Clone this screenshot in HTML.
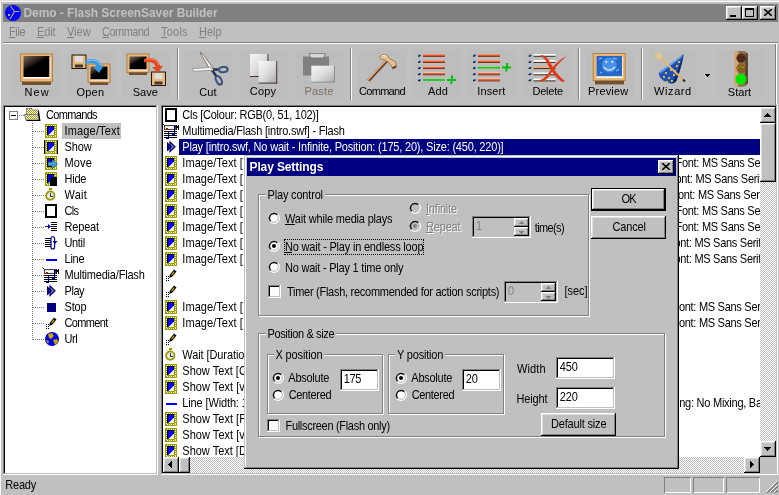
<!DOCTYPE html><html><head><meta charset="utf-8"><title>Demo - Flash ScreenSaver Builder</title><style>
html,body{margin:0;padding:0}
body{will-change:transform;width:779px;height:495px;overflow:hidden;background:#c0c0c0;position:relative;font:11px/13px "Liberation Sans",sans-serif;color:#000}
div,svg,span{position:absolute;white-space:nowrap}
u{text-decoration:none;border-bottom:1px solid currentColor;display:inline-block;line-height:9px}
.btn{background:#c0c0c0;box-shadow:inset -1px -1px #000,inset 1px 1px #fff,inset -2px -2px #808080,inset 2px 2px #dfdfdf}
.sunk{background:#fff;box-shadow:inset -1px -1px #fff,inset 1px 1px #808080,inset -2px -2px #c0c0c0,inset 2px 2px #000}
.dith{background:repeating-conic-gradient(#fff 0 25%,#c0c0c0 0 50%) 0 0/2px 2px}
.grp{border:1px solid #808080;box-shadow:1px 1px #fff,inset 1px 1px #fff}
.lab{background:#c0c0c0;padding:0 2px}
.dis{color:#808080;text-shadow:1px 1px #fff}
.tl{font-size:11px;line-height:13px;text-align:center}
.tb{background:#bdbdbd}
.x13{transform:scaleY(1.13);transform-origin:0 10px}
.x16{transform:scaleY(1.13);transform-origin:0 12px}
</style></head><body>
<svg width="0" height="0" style="left:0;top:0"><defs><linearGradient id="pg" x1="0" y1="0" x2="1" y2="1"><stop offset="0" stop-color="#f8f8f8"/><stop offset="0.5" stop-color="#dcdcdc"/><stop offset="1" stop-color="#a8a8a8"/></linearGradient><linearGradient id="sc" x1="0" y1="0" x2="0.7" y2="1"><stop offset="0" stop-color="#7a6a5c"/><stop offset="0.32" stop-color="#3a2c24"/><stop offset="0.5" stop-color="#000"/></linearGradient><pattern id="fd" width="2" height="2" patternUnits="userSpaceOnUse"><rect width="2" height="2" fill="#fff"/><rect width="1" height="1" fill="#a8a800"/><rect x="1" y="1" width="1" height="1" fill="#a8a800"/></pattern></defs></svg>
<div class="" style="left:0px;top:0px;width:779px;height:1px;background:#dcdcdc"></div>
<div class="" style="left:0px;top:1px;width:779px;height:1px;background:#fff"></div>
<div class="" style="left:0px;top:1px;width:1px;height:494px;background:#fff"></div>
<div class="" style="left:3px;top:4px;width:775px;height:18px;background:#808080"></div>
<svg style="left:5px;top:5px" width="16" height="16" viewBox="0 0 16 16" shape-rendering="crispEdges" ><circle cx="8" cy="8" r="8" fill="#0000ff" shape-rendering="auto"/><path d="M5.500 1 L9.500 6.500 L14.500 6.500 M9.500 6.500 L5 14" fill="none" stroke="#b0a878" stroke-width="1.200" shape-rendering="auto"/><rect x="2.500" y="9" width="2" height="2" fill="#b0a878"/></svg>
<div class="" style="left:23.5px;top:6px;font-weight:bold;color:#c0c0c0;font-size:12px;line-height:14px;letter-spacing:-0.062px">Demo - Flash ScreenSaver Builder</div>
<div class="btn" style="left:726px;top:6px;width:16px;height:14px;"></div>
<div class="" style="left:730px;top:15px;width:6px;height:2px;background:#000"></div>
<div class="btn" style="left:742px;top:6px;width:16px;height:14px;"></div>
<div class="" style="left:745px;top:8px;width:9px;height:9px;border:1px solid #000;border-top-width:2px;box-sizing:border-box"></div>
<div class="btn" style="left:760px;top:6px;width:16px;height:14px;"></div>
<svg style="left:764px;top:9px" width="8" height="7" viewBox="0 0 8 7" shape-rendering="crispEdges" ><path d="M0 0 L8 7 M8 0 L0 7" stroke="#000" stroke-width="1.6" shape-rendering="auto"/></svg>
<div class="" style="left:9px;top:37px;width:6px;height:1px;background:#808080"></div>
<div class="x13" style="left:9px;top:26px;color:#808080;letter-spacing:-0.373px">File</div>
<div class="" style="left:37px;top:37px;width:7px;height:1px;background:#808080"></div>
<div class="x13" style="left:37px;top:26px;color:#808080;letter-spacing:-0.123px">Edit</div>
<div class="" style="left:67px;top:37px;width:7px;height:1px;background:#808080"></div>
<div class="x13" style="left:67px;top:26px;color:#808080;letter-spacing:-0.014px">View</div>
<div class="" style="left:102px;top:37px;width:7px;height:1px;background:#808080"></div>
<div class="x13" style="left:102px;top:26px;color:#808080;letter-spacing:-0.525px">Command</div>
<div class="" style="left:161px;top:37px;width:6px;height:1px;background:#808080"></div>
<div class="x13" style="left:161px;top:26px;color:#808080;letter-spacing:0.228px">Tools</div>
<div class="" style="left:199px;top:37px;width:7px;height:1px;background:#808080"></div>
<div class="x13" style="left:199px;top:26px;color:#808080;letter-spacing:-0.008px">Help</div>
<div class="" style="left:3px;top:42px;width:775px;height:1px;background:#808080"></div>
<div class="" style="left:3px;top:43px;width:775px;height:1px;background:#fff"></div>
<div class="" style="left:775px;top:44px;width:1px;height:61px;background:#808080"></div>
<div class="" style="left:776px;top:44px;width:1px;height:61px;background:#fff"></div>
<div class="tb" style="left:12px;top:50px;width:48px;height:48px;"></div>
<svg style="left:12px;top:50px" width="48" height="37" viewBox="0 0 48 37"><rect x="8" y="3.500" width="33" height="28.500" fill="#e8b878"/><rect x="8.500" y="4" width="32" height="27.500" fill="none" stroke="#b08048" stroke-width="1"/><rect x="11.500" y="6" width="26" height="21" fill="url(#sc)"/><rect x="11.500" y="27" width="27" height="1.500" fill="#fff"/><rect x="37.500" y="7" width="1" height="20" fill="#f8e8d0"/><rect x="10" y="32" width="29" height="3" fill="#705030"/></svg>
<div class="" style="left:24.6px;top:86px;color:#000;letter-spacing:1.0px">New</div>
<div class="tb" style="left:67px;top:50px;width:48px;height:48px;"></div>
<svg style="left:67px;top:50px" width="48" height="37" viewBox="0 0 48 37"><rect x="5" y="5" width="14" height="13.500" fill="#e8b878" stroke="#201810" stroke-width="1"/><rect x="8" y="6" width="8" height="6" fill="#dcdcdc"/><rect x="8" y="14.5" width="8" height="3" fill="#403830"/><rect x="21" y="14" width="22" height="18.500" fill="#e8b878" stroke="#b08048" stroke-width="1"/><rect x="23.5" y="16.5" width="17" height="13" fill="url(#sc)"/><rect x="23.5" y="29.5" width="18" height="1" fill="#fff"/><rect x="23" y="32.5" width="18" height="2.500" fill="#705030"/><path d="M18 11 C25 7 33 9 34 16 L37 15 L32 23 L26 17 L29.500 17 C29 13 25 12 18 14z" fill="#3098e0"/><path d="M20 11.500 C26 9 31 10 33 15" stroke="#90d0ff" stroke-width="1" fill="none"/></svg>
<div class="" style="left:76.5px;top:86px;color:#000;letter-spacing:0.221px">Open</div>
<div class="tb" style="left:122px;top:50px;width:48px;height:48px;"></div>
<svg style="left:122px;top:50px" width="48" height="37" viewBox="0 0 48 37"><rect x="5" y="4" width="22" height="18.500" fill="#e8b878" stroke="#b08048" stroke-width="1"/><rect x="7.5" y="6.5" width="17" height="13" fill="url(#sc)"/><rect x="7.5" y="19.5" width="18" height="1" fill="#fff"/><rect x="7" y="22.5" width="18" height="2.500" fill="#705030"/><rect x="29.5" y="22" width="14" height="13.500" fill="#e8b878" stroke="#201810" stroke-width="1"/><rect x="32.5" y="23" width="8" height="6" fill="#dcdcdc"/><rect x="32.5" y="31.5" width="8" height="3" fill="#403830"/><path d="M22 9 C30 6 37 10 38 16 L41 15.500 L36 23 L30 17 L33.500 17 C33 13 29 11 22 12.500z" fill="#e04820"/><path d="M24 9.500 C30 8 35 10 37 15" stroke="#ff9070" stroke-width="1" fill="none"/></svg>
<div class="" style="left:132.7px;top:86px;color:#000;letter-spacing:0.069px">Save</div>
<div class="" style="left:177px;top:48px;width:1px;height:52px;background:#808080"></div>
<div class="" style="left:178px;top:48px;width:1px;height:52px;background:#fff"></div>
<div class="tb" style="left:185px;top:50px;width:48px;height:48px;"></div>
<svg style="left:185px;top:50px" width="48" height="37" viewBox="0 0 48 37"><polygon points="15,2.500 17.800,4 28.500,18.500 25.500,20.500" fill="#f0f0f0" stroke="#504840" stroke-width="0.700"/><polygon points="7,18.700 26,17.300 27.500,20.300 9,21.300" fill="#f0f0f0" stroke="#807870" stroke-width="0.600"/><path d="M27 19.400 L33 19.500 M27 20 L31.500 26.500" stroke="#283050" stroke-width="2.400"/><ellipse cx="38.300" cy="19.600" rx="4.300" ry="2.600" fill="none" stroke="#38507c" stroke-width="2" transform="rotate(-5 38.300 19.600)"/><ellipse cx="33.800" cy="30.300" rx="2.500" ry="4.600" fill="none" stroke="#38507c" stroke-width="2" transform="rotate(-28 33.800 30.300)"/><circle cx="27.300" cy="19.500" r="1" fill="#e0e0e0"/></svg>
<div class="" style="left:199.2px;top:86px;color:#000;letter-spacing:0.088px">Cut</div>
<div class="tb" style="left:240px;top:50px;width:48px;height:48px;"></div>
<svg style="left:240px;top:50px" width="48" height="37" viewBox="0 0 48 37"><rect x="10" y="4" width="18.5" height="23" fill="url(#pg)"/><rect x="27.5" y="4" width="1" height="23" fill="#403030"/><rect x="10" y="26" width="18.5" height="1" fill="#403030"/><rect x="18.7" y="11" width="18.5" height="22.6" fill="url(#pg)"/><rect x="36.2" y="11" width="1" height="22.6" fill="#403030"/><rect x="18.7" y="32.6" width="18.5" height="1" fill="#403030"/></svg>
<div class="" style="left:249.8px;top:85px;color:#000;letter-spacing:0.204px">Copy</div>
<div class="tb" style="left:295px;top:50px;width:48px;height:48px;"></div>
<svg style="left:295px;top:50px" width="48" height="37" viewBox="0 0 48 37"><rect x="8" y="6.500" width="26" height="19" fill="#808080"/><path d="M14 3.600 h16.400 l-2 4.400 h-12.400z" fill="#d8d8d8" stroke="#707070" stroke-width="0.800"/><rect x="16.300" y="15.700" width="23.700" height="17" fill="url(#pg)"/><rect x="16.300" y="31.700" width="23.700" height="1" fill="#909090"/><rect x="39" y="15.700" width="1" height="17" fill="#909090"/></svg>
<div class="" style="left:304.5px;top:85px;color:#807060;letter-spacing:0.186px">Paste</div>
<div class="" style="left:350px;top:48px;width:1px;height:52px;background:#808080"></div>
<div class="" style="left:351px;top:48px;width:1px;height:52px;background:#fff"></div>
<div class="tb" style="left:358px;top:50px;width:48px;height:48px;"></div>
<svg style="left:358px;top:50px" width="48" height="37" viewBox="0 0 48 37"><path d="M10.500 30.500 L30 9.500" stroke="#604020" stroke-width="3.200"/><path d="M10 29.700 L29.500 8.700" stroke="#e0b080" stroke-width="1.600"/><path d="M21.500 7 L24 4.500 L29 5 L32 9 L37.500 11.500 L38.500 15.500 L34 17.500 L32 13.500 L27 10 L23.500 9.500z" fill="#e8c090" stroke="#806040" stroke-width="0.700"/><path d="M34 17.500 L38.500 15.500 L38.500 17.500 L34.500 19.300z" fill="#604020"/><path d="M24 5.500 L28.500 6" stroke="#fff" stroke-width="1"/></svg>
<div class="" style="left:359.0px;top:85px;color:#000;letter-spacing:-0.692px">Command</div>
<div class="tb" style="left:413px;top:50px;width:48px;height:48px;"></div>
<svg style="left:413px;top:50px" width="48" height="37" viewBox="0 0 48 37"><rect x="5.5" y="4.6" width="2.500" height="1.500" fill="#2060c0"/><rect x="5" y="5.6" width="2" height="1" fill="#000"/><rect x="10" y="3.9" width="22" height="0.700" fill="#f8c8b0"/><rect x="10" y="4.5" width="22" height="1.500" fill="#e86030"/><rect x="10" y="5.9" width="22" height="0.900" fill="#802000"/><rect x="5.5" y="10.8" width="2.500" height="1.500" fill="#2060c0"/><rect x="5" y="11.8" width="2" height="1" fill="#000"/><rect x="10" y="10.0" width="22" height="0.700" fill="#f8c8b0"/><rect x="10" y="10.6" width="22" height="1.500" fill="#e86030"/><rect x="10" y="12.0" width="22" height="0.900" fill="#802000"/><rect x="5.5" y="16.9" width="2.500" height="1.500" fill="#2060c0"/><rect x="5" y="17.9" width="2" height="1" fill="#000"/><rect x="10" y="16.2" width="22" height="0.700" fill="#f8c8b0"/><rect x="10" y="16.8" width="22" height="1.500" fill="#e86030"/><rect x="10" y="18.2" width="22" height="0.900" fill="#802000"/><rect x="5.5" y="23.1" width="2.500" height="1.500" fill="#2060c0"/><rect x="5" y="24.1" width="2" height="1" fill="#000"/><rect x="10" y="22.4" width="22" height="0.700" fill="#f8c8b0"/><rect x="10" y="23.0" width="22" height="1.500" fill="#e86030"/><rect x="10" y="24.4" width="22" height="0.900" fill="#802000"/><rect x="5.5" y="29.2" width="2.500" height="1.500" fill="#2060c0"/><rect x="5" y="30.2" width="2" height="1" fill="#000"/><rect x="10" y="29.2" width="22" height="1.600" fill="#00d000"/><path d="M34 30.0 h9 M39.2 25.5 l-1 8.500" stroke="#00c000" stroke-width="2"/></svg>
<div class="" style="left:428.0px;top:85px;color:#000;letter-spacing:0.203px">Add</div>
<div class="tb" style="left:468px;top:50px;width:48px;height:48px;"></div>
<svg style="left:468px;top:50px" width="48" height="37" viewBox="0 0 48 37"><rect x="5.5" y="4.6" width="2.500" height="1.500" fill="#2060c0"/><rect x="5" y="5.6" width="2" height="1" fill="#000"/><rect x="10" y="3.9" width="22" height="0.700" fill="#f8c8b0"/><rect x="10" y="4.5" width="22" height="1.500" fill="#e86030"/><rect x="10" y="5.9" width="22" height="0.900" fill="#802000"/><rect x="5.5" y="10.8" width="2.500" height="1.500" fill="#2060c0"/><rect x="5" y="11.8" width="2" height="1" fill="#000"/><rect x="10" y="10.0" width="22" height="0.700" fill="#f8c8b0"/><rect x="10" y="10.6" width="22" height="1.500" fill="#e86030"/><rect x="10" y="12.0" width="22" height="0.900" fill="#802000"/><rect x="5.5" y="16.9" width="2.500" height="1.500" fill="#2060c0"/><rect x="5" y="17.9" width="2" height="1" fill="#000"/><rect x="10" y="16.9" width="22" height="1.600" fill="#00d000"/><rect x="5.5" y="23.1" width="2.500" height="1.500" fill="#2060c0"/><rect x="5" y="24.1" width="2" height="1" fill="#000"/><rect x="10" y="22.4" width="22" height="0.700" fill="#f8c8b0"/><rect x="10" y="23.0" width="22" height="1.500" fill="#e86030"/><rect x="10" y="24.4" width="22" height="0.900" fill="#802000"/><rect x="5.5" y="29.2" width="2.500" height="1.500" fill="#2060c0"/><rect x="5" y="30.2" width="2" height="1" fill="#000"/><rect x="10" y="28.5" width="22" height="0.700" fill="#f8c8b0"/><rect x="10" y="29.1" width="22" height="1.500" fill="#e86030"/><rect x="10" y="30.5" width="22" height="0.900" fill="#802000"/><path d="M34 17.5 h9 M39.2 13 l-1 8.500" stroke="#00c000" stroke-width="2"/></svg>
<div class="" style="left:477.2px;top:85px;color:#000;letter-spacing:0.134px">Insert</div>
<div class="tb" style="left:523px;top:50px;width:48px;height:48px;"></div>
<svg style="left:523px;top:50px" width="48" height="37" viewBox="0 0 48 37"><rect x="6.1" y="4.6" width="2.500" height="1.500" fill="#2060c0"/><rect x="5.6" y="5.6" width="2" height="1" fill="#000"/><rect x="10.6" y="4.0" width="21.9" height="1.800" fill="#fff"/><rect x="10.6" y="5.8" width="21.9" height="1" fill="#403020"/><rect x="6.1" y="10.8" width="2.500" height="1.500" fill="#2060c0"/><rect x="5.6" y="11.8" width="2" height="1" fill="#000"/><rect x="10.6" y="10.1" width="21.9" height="1.800" fill="#fff"/><rect x="10.6" y="11.9" width="21.9" height="1" fill="#403020"/><rect x="6.1" y="16.9" width="2.500" height="1.500" fill="#2060c0"/><rect x="5.6" y="17.9" width="2" height="1" fill="#000"/><rect x="10.6" y="16.3" width="21.9" height="1.800" fill="#e8b078"/><rect x="10.6" y="18.1" width="21.9" height="1" fill="#403020"/><rect x="6.1" y="23.1" width="2.500" height="1.500" fill="#2060c0"/><rect x="5.6" y="24.1" width="2" height="1" fill="#000"/><rect x="10.6" y="22.5" width="21.9" height="1.800" fill="#fff"/><rect x="10.6" y="24.3" width="21.9" height="1" fill="#403020"/><rect x="6.1" y="29.2" width="2.500" height="1.500" fill="#2060c0"/><rect x="5.6" y="30.2" width="2" height="1" fill="#000"/><rect x="10.6" y="28.6" width="21.9" height="1.800" fill="#fff"/><rect x="10.6" y="30.4" width="21.9" height="1" fill="#403020"/><path d="M17 5 C21 5 24 7 27 12 C31 20 36 27 42 31 L39 32 C33 28 27 20 24 13 C22 9 20 7 17 5z" fill="#e03818"/><path d="M44 6 C38 10 30 20 27 25 C24 29 22 31 18 32 L17 30 C21 29 24 25 27 21 C32 14 38 8 44 6z" fill="#e03818"/></svg>
<div class="" style="left:532.5px;top:85px;color:#000;letter-spacing:-0.242px">Delete</div>
<div class="" style="left:578px;top:48px;width:1px;height:52px;background:#808080"></div>
<div class="" style="left:579px;top:48px;width:1px;height:52px;background:#fff"></div>
<div class="tb" style="left:586px;top:50px;width:48px;height:48px;"></div>
<svg style="left:586px;top:50px" width="48" height="37" viewBox="0 0 48 37"><rect x="6.700" y="3" width="33" height="28" fill="#e8b878"/><rect x="7.200" y="3.500" width="32" height="27" fill="none" stroke="#b08048" stroke-width="1"/><rect x="10.600" y="6" width="25.400" height="20.400" fill="#2468c8"/><circle cx="23.300" cy="15" r="7.500" fill="#4890e8"/><circle cx="20.300" cy="12" r="1.200" fill="#c8e0ff"/><circle cx="26.300" cy="12" r="1.200" fill="#c8e0ff"/><path d="M17.500 17 Q23.300 23 29 17" stroke="#c8e0ff" stroke-width="1.600" fill="none"/><path d="M13 9 l3 -1 M27 8 l4 1 M14 22 l2 1 M30 21 l3 -2" stroke="#a0c8f8" stroke-width="1"/><rect x="10.600" y="26.400" width="26.400" height="1.500" fill="#fff"/><rect x="36" y="7" width="1" height="20" fill="#f8e8d0"/><rect x="9" y="31" width="29" height="3.400" fill="#705030"/></svg>
<div class="" style="left:588.1px;top:85px;color:#000;letter-spacing:0.146px">Preview</div>
<div class="" style="left:641px;top:48px;width:1px;height:52px;background:#808080"></div>
<div class="" style="left:642px;top:48px;width:1px;height:52px;background:#fff"></div>
<div class="tb" style="left:649px;top:50px;width:48px;height:48px;"></div>
<svg style="left:649px;top:50px" width="48" height="37" viewBox="0 0 48 37"><path d="M34.700 4 C30 8 17 17 10 22.600 C9 27 14 32 21.800 33.500 C25 33.500 27.500 32 28 29 C30 24 33 14 34.700 4z" fill="#2050b8"/><path d="M34.700 4 C33 14 30 24 28 29 C27.500 32 25 33.500 21.800 33.500 C25 30 30 18 34.700 4z" fill="#102868"/><path d="M33 6 C28 10 17 18 11 23" stroke="#60a8e8" stroke-width="1.500" fill="none"/><rect x="16" y="22" width="2" height="2" fill="#d8c030"/><rect x="21" y="19" width="2" height="2" fill="#d8c030"/><rect x="14" y="26" width="2" height="2" fill="#d8c030"/><rect x="19" y="27" width="2" height="2" fill="#d8c030"/><rect x="24" y="24" width="2" height="2" fill="#d8c030"/><rect x="22" y="30" width="2" height="2" fill="#d8c030"/><rect x="27" y="15" width="2" height="2" fill="#d8c030"/><rect x="29" y="11" width="2" height="2" fill="#d8c030"/><rect x="17" y="31" width="2" height="2" fill="#d8c030"/><rect x="25" y="20" width="2" height="2" fill="#d8c030"/><path d="M10 6.500 L36 31.500" stroke="#e0b870" stroke-width="1.800"/><path d="M34 29.500 L36 31.500" stroke="#302010" stroke-width="2"/><path d="M9.700 1.500 L9.700 10.500 M5.500 6 L14 6 M6.700 3 L12.700 9 M13 2.500 L6.500 9.500" stroke="#e8c888" stroke-width="1.200"/></svg>
<div class="" style="left:654.1px;top:85px;color:#000;letter-spacing:0.576px">Wizard</div>
<svg style="left:705px;top:74px" width="5" height="3" viewBox="0 0 5 3" shape-rendering="crispEdges" ><polygon points="0,0 5,0 2.5,3" fill="#000"/></svg>
<div class="tb" style="left:717px;top:50px;width:48px;height:48px;"></div>
<svg style="left:717px;top:50px" width="48" height="37" viewBox="0 0 48 37"><rect x="17" y="1" width="14" height="35.700" rx="5" fill="#8c7050"/><rect x="17" y="1" width="4.500" height="35.700" rx="2" fill="#d0a878"/><rect x="28" y="3" width="3" height="31" rx="1.500" fill="#604830"/><circle cx="24" cy="8" r="4.600" fill="#482818"/><circle cx="24" cy="18.200" r="4.600" fill="#806020"/><circle cx="24" cy="29.200" r="5.500" fill="#00e800"/><path d="M20 7 l3 -3 3 2 2 -2" stroke="#d04020" stroke-width="0.800" fill="none" stroke-dasharray="1 1"/><path d="M20 19 l3 -3 3 2 2 -3" stroke="#d8c020" stroke-width="0.800" fill="none" stroke-dasharray="1 1"/></svg>
<div class="" style="left:727.8px;top:86px;color:#000;letter-spacing:0.038px">Start</div>
<div class="sunk" style="left:3px;top:105px;width:155px;height:370px;"></div>
<div class="" style="left:9px;top:111px;width:9px;height:9px;border:1px solid #808080;box-sizing:border-box;background:#fff"></div>
<div class="" style="left:11px;top:115px;width:5px;height:1px;background:#000"></div>
<div class="" style="left:19px;top:115px;width:5px;height:1px;background:repeating-linear-gradient(90deg,#808080 0 1px,transparent 1px 2px)"></div>
<svg style="left:24px;top:108px" width="17" height="14" viewBox="0 0 17 14" shape-rendering="crispEdges" ><path d="M2.500 0.500 h5.500 l1.500 1.500 h5 v4.500 h-12z" fill="url(#fd)" stroke="#808080" stroke-width="1" shape-rendering="auto"/><path d="M0.500 6.500 h13 l1 5.500 h-12.500z" fill="url(#fd)" stroke="#808080" stroke-width="1" shape-rendering="auto"/><path d="M14 3 h1 l1.500 10 h-14 v-1 h12.500 l-1 -5.500z" fill="#000" shape-rendering="auto"/></svg>
<div class="x16" style="left:46px;top:107px;;letter-spacing:-0.664px;line-height:16px">Commands</div>
<div class="" style="left:32px;top:123px;width:1px;height:217px;background:repeating-linear-gradient(180deg,#808080 0 1px,transparent 1px 2px)"></div>
<div class="" style="left:33px;top:131px;width:11px;height:1px;background:repeating-linear-gradient(90deg,#808080 0 1px,transparent 1px 2px)"></div>
<svg style="left:45px;top:124px" width="16" height="16" viewBox="0 0 16 16" shape-rendering="crispEdges" overflow="visible"><rect x="0" y="0" width="12" height="14" fill="#a0a000"/><rect x="1.5" y="1.5" width="9" height="11" fill="none" stroke="#f0f0d0" stroke-width="1" stroke-dasharray="1 1"/><rect x="2" y="2" width="7" height="9" fill="#000"/><rect x="3" y="3" width="6" height="8" fill="#fff"/><polygon points="3,3 9,3 9,5.5 3.5,11 3,11" fill="#0000ff" shape-rendering="auto"/></svg>
<div class="" style="left:62px;top:123px;width:59px;height:16px;background:#c0c0c0"></div>
<div class="x16" style="left:64.5px;top:123px;;letter-spacing:0.162px;line-height:16px">Image/Text</div>
<div class="" style="left:33px;top:147px;width:11px;height:1px;background:repeating-linear-gradient(90deg,#808080 0 1px,transparent 1px 2px)"></div>
<svg style="left:45px;top:140px" width="16" height="16" viewBox="0 0 16 16" shape-rendering="crispEdges" overflow="visible"><rect x="0" y="0" width="12" height="14" fill="#a0a000"/><rect x="1.5" y="1.5" width="9" height="11" fill="none" stroke="#f0f0d0" stroke-width="1" stroke-dasharray="1 1"/><rect x="2" y="2" width="7" height="9" fill="#000"/><rect x="3" y="3" width="6" height="8" fill="#fff"/><polygon points="3,3 9,3 9,5.5 3.5,11 3,11" fill="#0000ff" shape-rendering="auto"/><rect x="-1" y="0" width="1" height="14" fill="#000"/><rect x="12" y="0" width="1" height="14" fill="#000"/></svg>
<div class="x16" style="left:64.5px;top:139px;;letter-spacing:-0.077px;line-height:16px">Show</div>
<div class="" style="left:33px;top:163px;width:11px;height:1px;background:repeating-linear-gradient(90deg,#808080 0 1px,transparent 1px 2px)"></div>
<svg style="left:45px;top:156px" width="16" height="16" viewBox="0 0 16 16" shape-rendering="crispEdges" overflow="visible"><rect x="0" y="0" width="12" height="14" fill="#a0a000"/><rect x="1.5" y="1.5" width="9" height="11" fill="none" stroke="#f0f0d0" stroke-width="1" stroke-dasharray="1 1"/><rect x="2" y="2" width="7" height="9" fill="#000"/><rect x="3" y="3" width="6" height="8" fill="#fff"/><rect x="3" y="3" width="6" height="8" fill="#000"/><rect x="3" y="3" width="3" height="3" fill="#0000ff"/><polygon points="3,6 7,6 7,3 12.5,8 7,13 7,10 3,10" fill="#40a0d8" stroke="#103060" stroke-width="0.5" shape-rendering="auto"/></svg>
<div class="x16" style="left:64.5px;top:155px;;letter-spacing:0.131px;line-height:16px">Move</div>
<div class="" style="left:33px;top:179px;width:11px;height:1px;background:repeating-linear-gradient(90deg,#808080 0 1px,transparent 1px 2px)"></div>
<svg style="left:45px;top:172px" width="16" height="16" viewBox="0 0 16 16" shape-rendering="crispEdges" overflow="visible"><rect x="0" y="0" width="12" height="14" fill="#a0a000"/><rect x="1.5" y="1.5" width="9" height="11" fill="none" stroke="#f0f0d0" stroke-width="1" stroke-dasharray="1 1"/><rect x="2" y="2" width="7" height="9" fill="#000"/><rect x="3" y="3" width="6" height="8" fill="#fff"/><polygon points="3,3 9,3 9,5.5 3.5,11 3,11" fill="#0000ff" shape-rendering="auto"/><rect x="5" y="5" width="7" height="9" fill="#000"/></svg>
<div class="x16" style="left:64.5px;top:171px;;letter-spacing:-0.242px;line-height:16px">Hide</div>
<div class="" style="left:33px;top:195px;width:11px;height:1px;background:repeating-linear-gradient(90deg,#808080 0 1px,transparent 1px 2px)"></div>
<svg style="left:45px;top:188px" width="16" height="16" viewBox="0 0 16 16" shape-rendering="crispEdges" overflow="visible"><circle cx="5.3" cy="7.6" r="4.2" fill="#e8e8e8" stroke="#989800" stroke-width="1.8" shape-rendering="auto"/><rect x="4" y="0" width="3" height="2" fill="#989800"/><rect x="5" y="5" width="1" height="4" fill="#404040"/><rect x="5" y="8" width="3" height="1" fill="#404040"/></svg>
<div class="x16" style="left:64.5px;top:187px;;letter-spacing:0.202px;line-height:16px">Wait</div>
<div class="" style="left:33px;top:211px;width:11px;height:1px;background:repeating-linear-gradient(90deg,#808080 0 1px,transparent 1px 2px)"></div>
<svg style="left:45px;top:204px" width="16" height="16" viewBox="0 0 16 16" shape-rendering="crispEdges" overflow="visible"><rect x="1" y="1" width="10" height="12" fill="#fff" stroke="#000" stroke-width="2"/></svg>
<div class="x16" style="left:64.5px;top:203px;;letter-spacing:-0.638px;line-height:16px">Cls</div>
<div class="" style="left:33px;top:227px;width:11px;height:1px;background:repeating-linear-gradient(90deg,#808080 0 1px,transparent 1px 2px)"></div>
<svg style="left:45px;top:220px" width="16" height="16" viewBox="0 0 16 16" shape-rendering="crispEdges" overflow="visible"><rect x="0" y="6" width="5" height="1" fill="#0000c0"/><polygon points="3,4 6,6.5 3,9" fill="#0000c0" shape-rendering="auto"/><rect x="6" y="2" width="6" height="1" fill="#000"/><rect x="6" y="4" width="6" height="1" fill="#000"/><rect x="6" y="6" width="6" height="1" fill="#000"/><rect x="6" y="8" width="6" height="1" fill="#000"/><rect x="6" y="10" width="6" height="1" fill="#000"/></svg>
<div class="x16" style="left:64.5px;top:219px;;letter-spacing:-0.18px;line-height:16px">Repeat</div>
<div class="" style="left:33px;top:243px;width:11px;height:1px;background:repeating-linear-gradient(90deg,#808080 0 1px,transparent 1px 2px)"></div>
<svg style="left:45px;top:236px" width="16" height="16" viewBox="0 0 16 16" shape-rendering="crispEdges" overflow="visible"><rect x="0" y="2" width="6" height="1" fill="#000"/><rect x="0" y="4" width="6" height="1" fill="#000"/><rect x="0" y="6" width="6" height="1" fill="#000"/><rect x="0" y="8" width="6" height="1" fill="#000"/><rect x="0" y="10" width="6" height="1" fill="#000"/><path d="M6 4 V2.500 Q6 0.600 7.800 0.600 Q9.600 0.600 9.600 2.500 V11 Q9.600 13 7.800 13 Q6 13 6 11 V2.500" fill="#fff" stroke="#000090" stroke-width="1.200" shape-rendering="auto"/><polygon points="7.500,5 12.500,5 10,8" fill="#000090" shape-rendering="auto"/></svg>
<div class="x16" style="left:64.5px;top:235px;;letter-spacing:-0.35px;line-height:16px">Until</div>
<div class="" style="left:33px;top:259px;width:11px;height:1px;background:repeating-linear-gradient(90deg,#808080 0 1px,transparent 1px 2px)"></div>
<svg style="left:45px;top:252px" width="16" height="16" viewBox="0 0 16 16" shape-rendering="crispEdges" overflow="visible"><rect x="1" y="7" width="11" height="2" fill="#0000ff"/></svg>
<div class="x16" style="left:64.5px;top:251px;;letter-spacing:-0.237px;line-height:16px">Line</div>
<div class="" style="left:33px;top:275px;width:11px;height:1px;background:repeating-linear-gradient(90deg,#808080 0 1px,transparent 1px 2px)"></div>
<svg style="left:45px;top:268px" width="16" height="16" viewBox="0 0 16 16" shape-rendering="crispEdges" overflow="visible"><path d="M-2.500 -0.500 L0 2" stroke="#000" stroke-width="1" shape-rendering="auto"/><rect x="-0.500" y="1.500" width="11" height="4" fill="#e8e8e8" stroke="#404040" stroke-width="1"/><rect x="1" y="3" width="7" height="1" fill="#fff"/><rect x="1" y="4" width="2" height="1" fill="#e00000"/><rect x="-1" y="7" width="13" height="1" fill="#000"/><rect x="-1" y="9" width="13" height="1" fill="#000"/><rect x="-1" y="11" width="13" height="1" fill="#000"/><rect x="-1" y="13" width="13" height="1" fill="#000"/><rect x="3" y="7" width="1" height="8" fill="#000090"/><rect x="1" y="13" width="3" height="2" fill="#000090"/><rect x="9" y="2" width="1" height="9" fill="#000090"/><rect x="7" y="9" width="3" height="2" fill="#000090"/><rect x="9" y="2" width="3" height="1" fill="#000090"/><rect x="3" y="7" width="2" height="1" fill="#000090"/><rect x="11" y="1" width="1" height="5" fill="#000"/><rect x="13" y="1" width="1" height="5" fill="#000"/><rect x="12" y="2" width="1" height="2" fill="#000"/></svg>
<div class="x16" style="left:64.5px;top:267px;;letter-spacing:-0.19px;line-height:16px">Multimedia/Flash</div>
<div class="" style="left:33px;top:291px;width:11px;height:1px;background:repeating-linear-gradient(90deg,#808080 0 1px,transparent 1px 2px)"></div>
<svg style="left:45px;top:284px" width="16" height="16" viewBox="0 0 16 16" shape-rendering="crispEdges" overflow="visible"><polygon points="5,2 10,6.750 5,11.500" fill="#9090a0" stroke="#000080" stroke-width="1.200" shape-rendering="auto"/><polygon points="2,2 2,11.500 7.500,6.750" fill="#000080" shape-rendering="auto"/></svg>
<div class="x16" style="left:64.5px;top:283px;;letter-spacing:-0.435px;line-height:16px">Play</div>
<div class="" style="left:33px;top:307px;width:11px;height:1px;background:repeating-linear-gradient(90deg,#808080 0 1px,transparent 1px 2px)"></div>
<svg style="left:45px;top:300px" width="16" height="16" viewBox="0 0 16 16" shape-rendering="crispEdges" overflow="visible"><rect x="2" y="3" width="9" height="9" fill="#000080"/></svg>
<div class="x16" style="left:64.5px;top:299px;;letter-spacing:-0.185px;line-height:16px">Stop</div>
<div class="" style="left:33px;top:323px;width:11px;height:1px;background:repeating-linear-gradient(90deg,#808080 0 1px,transparent 1px 2px)"></div>
<svg style="left:45px;top:316px" width="16" height="16" viewBox="0 0 16 16" shape-rendering="crispEdges" overflow="visible"><rect x="1" y="8" width="1" height="1" fill="#000"/><rect x="1" y="10" width="1" height="1" fill="#000"/><rect x="1" y="12" width="1" height="1" fill="#000"/><rect x="3" y="8" width="1" height="1" fill="#000"/><rect x="3" y="10" width="1" height="1" fill="#000"/><rect x="3" y="12" width="1" height="1" fill="#000"/><polygon points="4,10 5,6.500 9,1.500 11.500,3.500 7.500,8.500" fill="#000" shape-rendering="auto"/><polygon points="6,6.500 8.700,3.200 9.800,4.100 7.100,7.400" fill="#c8a000" shape-rendering="auto"/></svg>
<div class="x16" style="left:64.5px;top:315px;;letter-spacing:-0.631px;line-height:16px">Comment</div>
<div class="" style="left:33px;top:339px;width:11px;height:1px;background:repeating-linear-gradient(90deg,#808080 0 1px,transparent 1px 2px)"></div>
<svg style="left:45px;top:332px" width="16" height="16" viewBox="0 0 16 16" shape-rendering="crispEdges" overflow="visible"><circle cx="7" cy="7" r="7" fill="#0000e0" shape-rendering="auto"/><path d="M3 2 l4 -1 2 3 -3 3 -2 -1z M8 8 l4 -1 1 3 -3 3z M1 8 l3 1 -1 3z" fill="#c8a800" shape-rendering="auto"/></svg>
<div class="x16" style="left:64.5px;top:331px;;letter-spacing:-0.466px;line-height:16px">Url</div>
<div class="sunk" style="left:161px;top:105px;width:617px;height:370px;"></div>
<div class="x16" style="left:182.3px;top:107px;;letter-spacing:-0.255px;line-height:16px">Cls [Colour: RGB(0, 51, 102)]</div>
<svg style="left:165px;top:108px" width="16" height="16" viewBox="0 0 16 16" shape-rendering="crispEdges" overflow="visible"><rect x="1" y="1" width="10" height="12" fill="#fff" stroke="#000" stroke-width="2"/></svg>
<div class="x16" style="left:182.3px;top:123px;;letter-spacing:-0.211px;line-height:16px">Multimedia/Flash [intro.swf] - Flash</div>
<svg style="left:165px;top:124px" width="16" height="16" viewBox="0 0 16 16" shape-rendering="crispEdges" overflow="visible"><path d="M-2.500 -0.500 L0 2" stroke="#000" stroke-width="1" shape-rendering="auto"/><rect x="-0.500" y="1.500" width="11" height="4" fill="#e8e8e8" stroke="#404040" stroke-width="1"/><rect x="1" y="3" width="7" height="1" fill="#fff"/><rect x="1" y="4" width="2" height="1" fill="#e00000"/><rect x="-1" y="7" width="13" height="1" fill="#000"/><rect x="-1" y="9" width="13" height="1" fill="#000"/><rect x="-1" y="11" width="13" height="1" fill="#000"/><rect x="-1" y="13" width="13" height="1" fill="#000"/><rect x="3" y="7" width="1" height="8" fill="#000090"/><rect x="1" y="13" width="3" height="2" fill="#000090"/><rect x="9" y="2" width="1" height="9" fill="#000090"/><rect x="7" y="9" width="3" height="2" fill="#000090"/><rect x="9" y="2" width="3" height="1" fill="#000090"/><rect x="3" y="7" width="2" height="1" fill="#000090"/><rect x="11" y="1" width="1" height="5" fill="#000"/><rect x="13" y="1" width="1" height="5" fill="#000"/><rect x="12" y="2" width="1" height="2" fill="#000"/></svg>
<div class="" style="left:179px;top:139px;width:581px;height:16px;background:#000080"></div>
<div class="x16" style="left:182.3px;top:139px;color:#fff;letter-spacing:-0.193px;line-height:16px">Play [intro.swf, No wait - Infinite, Position: (175, 20), Size: (450, 220)]</div>
<svg style="left:165px;top:140px" width="16" height="16" viewBox="0 0 16 16" shape-rendering="crispEdges" overflow="visible"><polygon points="5,2 10,6.750 5,11.500" fill="#9090a0" stroke="#000080" stroke-width="1.200" shape-rendering="auto"/><polygon points="2,2 2,11.500 7.500,6.750" fill="#000080" shape-rendering="auto"/></svg>
<div class="x16" style="left:182.3px;top:155px;;letter-spacing:0.057px;line-height:16px">Image/Text [</div>
<svg style="left:165px;top:156px" width="16" height="16" viewBox="0 0 16 16" shape-rendering="crispEdges" overflow="visible"><rect x="0" y="0" width="12" height="14" fill="#a0a000"/><rect x="1.5" y="1.5" width="9" height="11" fill="none" stroke="#f0f0d0" stroke-width="1" stroke-dasharray="1 1"/><rect x="2" y="2" width="7" height="9" fill="#000"/><rect x="3" y="3" width="6" height="8" fill="#fff"/><polygon points="3,3 9,3 9,5.5 3.5,11 3,11" fill="#0000ff" shape-rendering="auto"/></svg>
<div class="" style="left:679px;top:155px;width:81px;height:16px;overflow:hidden"><div class="x16" style="left:-3.5px;top:0;line-height:16px;letter-spacing:-0.284px">Font: MS Sans Serif</div></div>
<div class="x16" style="left:182.3px;top:171px;;letter-spacing:0.057px;line-height:16px">Image/Text [</div>
<svg style="left:165px;top:172px" width="16" height="16" viewBox="0 0 16 16" shape-rendering="crispEdges" overflow="visible"><rect x="0" y="0" width="12" height="14" fill="#a0a000"/><rect x="1.5" y="1.5" width="9" height="11" fill="none" stroke="#f0f0d0" stroke-width="1" stroke-dasharray="1 1"/><rect x="2" y="2" width="7" height="9" fill="#000"/><rect x="3" y="3" width="6" height="8" fill="#fff"/><polygon points="3,3 9,3 9,5.5 3.5,11 3,11" fill="#0000ff" shape-rendering="auto"/></svg>
<div class="" style="left:679px;top:171px;width:81px;height:16px;overflow:hidden"><div class="x16" style="left:-10px;top:0;line-height:16px;letter-spacing:-0.284px">Font: MS Sans Serif</div></div>
<div class="x16" style="left:182.3px;top:187px;;letter-spacing:0.057px;line-height:16px">Image/Text [</div>
<svg style="left:165px;top:188px" width="16" height="16" viewBox="0 0 16 16" shape-rendering="crispEdges" overflow="visible"><rect x="0" y="0" width="12" height="14" fill="#a0a000"/><rect x="1.5" y="1.5" width="9" height="11" fill="none" stroke="#f0f0d0" stroke-width="1" stroke-dasharray="1 1"/><rect x="2" y="2" width="7" height="9" fill="#000"/><rect x="3" y="3" width="6" height="8" fill="#fff"/><polygon points="3,3 9,3 9,5.5 3.5,11 3,11" fill="#0000ff" shape-rendering="auto"/></svg>
<div class="" style="left:679px;top:187px;width:81px;height:16px;overflow:hidden"><div class="x16" style="left:-7.5px;top:0;line-height:16px;letter-spacing:-0.284px">Font: MS Sans Serif</div></div>
<div class="x16" style="left:182.3px;top:203px;;letter-spacing:0.057px;line-height:16px">Image/Text [</div>
<svg style="left:165px;top:204px" width="16" height="16" viewBox="0 0 16 16" shape-rendering="crispEdges" overflow="visible"><rect x="0" y="0" width="12" height="14" fill="#a0a000"/><rect x="1.5" y="1.5" width="9" height="11" fill="none" stroke="#f0f0d0" stroke-width="1" stroke-dasharray="1 1"/><rect x="2" y="2" width="7" height="9" fill="#000"/><rect x="3" y="3" width="6" height="8" fill="#fff"/><polygon points="3,3 9,3 9,5.5 3.5,11 3,11" fill="#0000ff" shape-rendering="auto"/></svg>
<div class="" style="left:679px;top:203px;width:81px;height:16px;overflow:hidden"><div class="x16" style="left:-3.5px;top:0;line-height:16px;letter-spacing:-0.284px">Font: MS Sans Serif</div></div>
<div class="x16" style="left:182.3px;top:219px;;letter-spacing:0.057px;line-height:16px">Image/Text [</div>
<svg style="left:165px;top:220px" width="16" height="16" viewBox="0 0 16 16" shape-rendering="crispEdges" overflow="visible"><rect x="0" y="0" width="12" height="14" fill="#a0a000"/><rect x="1.5" y="1.5" width="9" height="11" fill="none" stroke="#f0f0d0" stroke-width="1" stroke-dasharray="1 1"/><rect x="2" y="2" width="7" height="9" fill="#000"/><rect x="3" y="3" width="6" height="8" fill="#fff"/><polygon points="3,3 9,3 9,5.5 3.5,11 3,11" fill="#0000ff" shape-rendering="auto"/></svg>
<div class="" style="left:679px;top:219px;width:81px;height:16px;overflow:hidden"><div class="x16" style="left:-3.5px;top:0;line-height:16px;letter-spacing:-0.284px">Font: MS Sans Serif</div></div>
<div class="x16" style="left:182.3px;top:235px;;letter-spacing:0.057px;line-height:16px">Image/Text [</div>
<svg style="left:165px;top:236px" width="16" height="16" viewBox="0 0 16 16" shape-rendering="crispEdges" overflow="visible"><rect x="0" y="0" width="12" height="14" fill="#a0a000"/><rect x="1.5" y="1.5" width="9" height="11" fill="none" stroke="#f0f0d0" stroke-width="1" stroke-dasharray="1 1"/><rect x="2" y="2" width="7" height="9" fill="#000"/><rect x="3" y="3" width="6" height="8" fill="#fff"/><polygon points="3,3 9,3 9,5.5 3.5,11 3,11" fill="#0000ff" shape-rendering="auto"/></svg>
<div class="" style="left:679px;top:235px;width:81px;height:16px;overflow:hidden"><div class="x16" style="left:-11px;top:0;line-height:16px;letter-spacing:-0.284px">Font: MS Sans Serif,</div></div>
<div class="x16" style="left:182.3px;top:251px;;letter-spacing:0.057px;line-height:16px">Image/Text [</div>
<svg style="left:165px;top:252px" width="16" height="16" viewBox="0 0 16 16" shape-rendering="crispEdges" overflow="visible"><rect x="0" y="0" width="12" height="14" fill="#a0a000"/><rect x="1.5" y="1.5" width="9" height="11" fill="none" stroke="#f0f0d0" stroke-width="1" stroke-dasharray="1 1"/><rect x="2" y="2" width="7" height="9" fill="#000"/><rect x="3" y="3" width="6" height="8" fill="#fff"/><polygon points="3,3 9,3 9,5.5 3.5,11 3,11" fill="#0000ff" shape-rendering="auto"/></svg>
<div class="" style="left:679px;top:251px;width:81px;height:16px;overflow:hidden"><div class="x16" style="left:-11px;top:0;line-height:16px;letter-spacing:-0.284px">Font: MS Sans Serif,</div></div>
<svg style="left:165px;top:268px" width="16" height="16" viewBox="0 0 16 16" shape-rendering="crispEdges" overflow="visible"><rect x="1" y="8" width="1" height="1" fill="#000"/><rect x="1" y="10" width="1" height="1" fill="#000"/><rect x="1" y="12" width="1" height="1" fill="#000"/><rect x="3" y="8" width="1" height="1" fill="#000"/><rect x="3" y="10" width="1" height="1" fill="#000"/><rect x="3" y="12" width="1" height="1" fill="#000"/><polygon points="4,10 5,6.500 9,1.500 11.500,3.500 7.500,8.500" fill="#000" shape-rendering="auto"/><polygon points="6,6.500 8.700,3.200 9.800,4.100 7.100,7.400" fill="#c8a000" shape-rendering="auto"/></svg>
<svg style="left:165px;top:284px" width="16" height="16" viewBox="0 0 16 16" shape-rendering="crispEdges" overflow="visible"><rect x="1" y="8" width="1" height="1" fill="#000"/><rect x="1" y="10" width="1" height="1" fill="#000"/><rect x="1" y="12" width="1" height="1" fill="#000"/><rect x="3" y="8" width="1" height="1" fill="#000"/><rect x="3" y="10" width="1" height="1" fill="#000"/><rect x="3" y="12" width="1" height="1" fill="#000"/><polygon points="4,10 5,6.500 9,1.500 11.500,3.500 7.500,8.500" fill="#000" shape-rendering="auto"/><polygon points="6,6.500 8.700,3.200 9.800,4.100 7.100,7.400" fill="#c8a000" shape-rendering="auto"/></svg>
<div class="x16" style="left:182.3px;top:299px;;letter-spacing:0.057px;line-height:16px">Image/Text [</div>
<svg style="left:165px;top:300px" width="16" height="16" viewBox="0 0 16 16" shape-rendering="crispEdges" overflow="visible"><rect x="0" y="0" width="12" height="14" fill="#a0a000"/><rect x="1.5" y="1.5" width="9" height="11" fill="none" stroke="#f0f0d0" stroke-width="1" stroke-dasharray="1 1"/><rect x="2" y="2" width="7" height="9" fill="#000"/><rect x="3" y="3" width="6" height="8" fill="#fff"/><polygon points="3,3 9,3 9,5.5 3.5,11 3,11" fill="#0000ff" shape-rendering="auto"/></svg>
<div class="" style="left:679px;top:299px;width:81px;height:16px;overflow:hidden"><div class="x16" style="left:-6.5px;top:0;line-height:16px;letter-spacing:-0.284px">Font: MS Sans Serif</div></div>
<div class="x16" style="left:182.3px;top:315px;;letter-spacing:0.057px;line-height:16px">Image/Text [</div>
<svg style="left:165px;top:316px" width="16" height="16" viewBox="0 0 16 16" shape-rendering="crispEdges" overflow="visible"><rect x="0" y="0" width="12" height="14" fill="#a0a000"/><rect x="1.5" y="1.5" width="9" height="11" fill="none" stroke="#f0f0d0" stroke-width="1" stroke-dasharray="1 1"/><rect x="2" y="2" width="7" height="9" fill="#000"/><rect x="3" y="3" width="6" height="8" fill="#fff"/><polygon points="3,3 9,3 9,5.5 3.5,11 3,11" fill="#0000ff" shape-rendering="auto"/></svg>
<div class="" style="left:679px;top:315px;width:81px;height:16px;overflow:hidden"><div class="x16" style="left:-6.5px;top:0;line-height:16px;letter-spacing:-0.284px">Font: MS Sans Serif</div></div>
<svg style="left:165px;top:332px" width="16" height="16" viewBox="0 0 16 16" shape-rendering="crispEdges" overflow="visible"><rect x="1" y="8" width="1" height="1" fill="#000"/><rect x="1" y="10" width="1" height="1" fill="#000"/><rect x="1" y="12" width="1" height="1" fill="#000"/><rect x="3" y="8" width="1" height="1" fill="#000"/><rect x="3" y="10" width="1" height="1" fill="#000"/><rect x="3" y="12" width="1" height="1" fill="#000"/><polygon points="4,10 5,6.500 9,1.500 11.500,3.500 7.500,8.500" fill="#000" shape-rendering="auto"/><polygon points="6,6.500 8.700,3.200 9.800,4.100 7.100,7.400" fill="#c8a000" shape-rendering="auto"/></svg>
<div class="x16" style="left:182.3px;top:347px;;letter-spacing:-0.093px;line-height:16px">Wait [Duration</div>
<svg style="left:165px;top:348px" width="16" height="16" viewBox="0 0 16 16" shape-rendering="crispEdges" overflow="visible"><circle cx="5.3" cy="7.6" r="4.2" fill="#e8e8e8" stroke="#989800" stroke-width="1.8" shape-rendering="auto"/><rect x="4" y="0" width="3" height="2" fill="#989800"/><rect x="5" y="5" width="1" height="4" fill="#404040"/><rect x="5" y="8" width="3" height="1" fill="#404040"/></svg>
<div class="x16" style="left:182.3px;top:363px;;letter-spacing:-0.004px;line-height:16px">Show Text [C</div>
<svg style="left:165px;top:364px" width="16" height="16" viewBox="0 0 16 16" shape-rendering="crispEdges" overflow="visible"><rect x="0" y="0" width="12" height="14" fill="#a0a000"/><rect x="1.5" y="1.5" width="9" height="11" fill="none" stroke="#f0f0d0" stroke-width="1" stroke-dasharray="1 1"/><rect x="2" y="2" width="7" height="9" fill="#000"/><rect x="3" y="3" width="6" height="8" fill="#fff"/><polygon points="3,3 9,3 9,5.5 3.5,11 3,11" fill="#0000ff" shape-rendering="auto"/></svg>
<div class="x16" style="left:182.3px;top:379px;;letter-spacing:0.036px;line-height:16px">Show Text [v</div>
<svg style="left:165px;top:380px" width="16" height="16" viewBox="0 0 16 16" shape-rendering="crispEdges" overflow="visible"><rect x="0" y="0" width="12" height="14" fill="#a0a000"/><rect x="1.5" y="1.5" width="9" height="11" fill="none" stroke="#f0f0d0" stroke-width="1" stroke-dasharray="1 1"/><rect x="2" y="2" width="7" height="9" fill="#000"/><rect x="3" y="3" width="6" height="8" fill="#fff"/><polygon points="3,3 9,3 9,5.5 3.5,11 3,11" fill="#0000ff" shape-rendering="auto"/></svg>
<div class="x16" style="left:182.3px;top:395px;;letter-spacing:-0.132px;line-height:16px">Line [Width: 1</div>
<svg style="left:165px;top:396px" width="16" height="16" viewBox="0 0 16 16" shape-rendering="crispEdges" overflow="visible"><rect x="1" y="7" width="11" height="2" fill="#0000ff"/></svg>
<div class="" style="left:679px;top:395px;width:81px;height:16px;overflow:hidden"><div class="x16" style="left:-18.3px;top:0;line-height:16px;letter-spacing:-0.25px">Mixing: No Mixing, Background</div></div>
<div class="x16" style="left:182.3px;top:411px;;letter-spacing:0.016px;line-height:16px">Show Text [F</div>
<svg style="left:165px;top:412px" width="16" height="16" viewBox="0 0 16 16" shape-rendering="crispEdges" overflow="visible"><rect x="0" y="0" width="12" height="14" fill="#a0a000"/><rect x="1.5" y="1.5" width="9" height="11" fill="none" stroke="#f0f0d0" stroke-width="1" stroke-dasharray="1 1"/><rect x="2" y="2" width="7" height="9" fill="#000"/><rect x="3" y="3" width="6" height="8" fill="#fff"/><polygon points="3,3 9,3 9,5.5 3.5,11 3,11" fill="#0000ff" shape-rendering="auto"/></svg>
<div class="x16" style="left:182.3px;top:427px;;letter-spacing:0.036px;line-height:16px">Show Text [v</div>
<svg style="left:165px;top:428px" width="16" height="16" viewBox="0 0 16 16" shape-rendering="crispEdges" overflow="visible"><rect x="0" y="0" width="12" height="14" fill="#a0a000"/><rect x="1.5" y="1.5" width="9" height="11" fill="none" stroke="#f0f0d0" stroke-width="1" stroke-dasharray="1 1"/><rect x="2" y="2" width="7" height="9" fill="#000"/><rect x="3" y="3" width="6" height="8" fill="#fff"/><polygon points="3,3 9,3 9,5.5 3.5,11 3,11" fill="#0000ff" shape-rendering="auto"/></svg>
<div class="x16" style="left:182.3px;top:443px;;letter-spacing:-0.004px;line-height:16px">Show Text [D</div>
<svg style="left:165px;top:444px" width="16" height="16" viewBox="0 0 16 16" shape-rendering="crispEdges" overflow="visible"><rect x="0" y="0" width="12" height="14" fill="#a0a000"/><rect x="1.5" y="1.5" width="9" height="11" fill="none" stroke="#f0f0d0" stroke-width="1" stroke-dasharray="1 1"/><rect x="2" y="2" width="7" height="9" fill="#000"/><rect x="3" y="3" width="6" height="8" fill="#fff"/><polygon points="3,3 9,3 9,5.5 3.5,11 3,11" fill="#0000ff" shape-rendering="auto"/></svg>
<div class="dith" style="left:760px;top:107px;width:16px;height:350px;"></div>
<div class="btn" style="left:760px;top:107px;width:16px;height:16px;"></div>
<svg style="left:764px;top:113px" width="7" height="4" viewBox="0 0 7 4" shape-rendering="crispEdges" ><polygon points="0,4 7,4 3.5,0" fill="#000"/></svg>
<div class="btn" style="left:760px;top:123px;width:16px;height:59px;"></div>
<div class="btn" style="left:760px;top:441px;width:16px;height:16px;"></div>
<svg style="left:764px;top:447px" width="7" height="4" viewBox="0 0 7 4" shape-rendering="crispEdges" ><polygon points="0,0 7,0 3.5,4" fill="#000"/></svg>
<div class="dith" style="left:163px;top:457px;width:597px;height:16px;"></div>
<div class="btn" style="left:163px;top:457px;width:16px;height:16px;"></div>
<svg style="left:168px;top:461px" width="4" height="7" viewBox="0 0 4 7" shape-rendering="crispEdges" ><polygon points="4,0 4,7 0,3.5" fill="#000"/></svg>
<div class="btn" style="left:179px;top:457px;width:11px;height:16px;"></div>
<div class="btn" style="left:744px;top:457px;width:16px;height:16px;"></div>
<svg style="left:750px;top:461px" width="4" height="7" viewBox="0 0 4 7" shape-rendering="crispEdges" ><polygon points="0,0 0,7 4,3.5" fill="#000"/></svg>
<div class="" style="left:760px;top:457px;width:16px;height:16px;background:#c0c0c0"></div>
<div class="x13" style="left:5.3px;top:479px;;letter-spacing:-0.228px">Ready</div>
<div class="" style="left:664px;top:477px;width:27px;height:16px;box-shadow:inset 1px 1px #808080,inset -1px -1px #fff"></div>
<div class="" style="left:693px;top:477px;width:31px;height:16px;box-shadow:inset 1px 1px #808080,inset -1px -1px #fff"></div>
<div class="" style="left:726px;top:477px;width:34px;height:16px;box-shadow:inset 1px 1px #808080,inset -1px -1px #fff"></div>
<svg style="left:765px;top:480px" width="13" height="13" viewBox="0 0 13 13" shape-rendering="crispEdges" ><path d="M12 1 L1 12 M12 5 L5 12 M12 9 L9 12" stroke="#fff" stroke-width="1" shape-rendering="auto"/><path d="M13 2 L2 13 M13 6 L6 13 M13 10 L10 13" stroke="#808080" stroke-width="1.6" shape-rendering="auto"/></svg>
<div style="left:244px;top:155px;width:435px;height:314px;background:#c0c0c0;box-shadow:inset -1px -1px #000,inset 1px 1px #c0c0c0,inset -2px -2px #808080,inset 2px 2px #fff">
<div class="" style="left:3px;top:3px;width:429px;height:18px;background:#000080"></div>
<div class="" style="left:5.5px;top:5px;font-weight:bold;color:#fff;font-size:12px;line-height:14px;letter-spacing:-0.119px">Play Settings</div>
<div class="btn" style="left:414px;top:5px;width:16px;height:14px;"></div>
<svg style="left:418px;top:8px" width="8" height="7" viewBox="0 0 8 7" shape-rendering="crispEdges" ><path d="M0 0 L8 7 M8 0 L0 7" stroke="#000" stroke-width="1.6" shape-rendering="auto"/></svg>
<div class="grp" style="left:14px;top:39px;width:331px;height:122px;box-sizing:border-box"></div>
<div class="lab x13" style="left:21.5px;top:34px;;letter-spacing:-0.173px">Play control</div>
<svg style="left:24px;top:57px" width="12" height="12" viewBox="0 0 12 12"><circle cx="6" cy="6" r="6" fill="#fff"/><path d="M10.240 1.760 A6 6 0 0 0 1.760 10.240z" fill="#808080"/><circle cx="6" cy="6" r="5" fill="#c0c0c0"/><path d="M9.540 2.460 A5 5 0 0 0 2.460 9.540z" fill="#000"/><circle cx="6" cy="6" r="3.8" fill="#fff"/></svg>
<div class="" style="left:41px;top:69px;width:10px;height:1px;background:#000"></div>
<div class="x13" style="left:41px;top:58px;;letter-spacing:-0.186px">Wait while media plays</div>
<svg style="left:165px;top:47px" width="12" height="12" viewBox="0 0 12 12"><circle cx="6" cy="6" r="6" fill="#fff"/><path d="M10.240 1.760 A6 6 0 0 0 1.760 10.240z" fill="#808080"/><circle cx="6" cy="6" r="5" fill="#c0c0c0"/><path d="M9.540 2.460 A5 5 0 0 0 2.460 9.540z" fill="#000"/><circle cx="6" cy="6" r="3.8" fill="#c0c0c0"/></svg>
<div class="" style="left:183px;top:60px;width:3px;height:1px;background:#fff"></div>
<div class="" style="left:182px;top:59px;width:3px;height:1px;background:#808080"></div>
<div class="dis x13" style="left:182px;top:48px;;letter-spacing:-0.191px">Infinite</div>
<svg style="left:165px;top:65px" width="12" height="12" viewBox="0 0 12 12"><circle cx="6" cy="6" r="6" fill="#fff"/><path d="M10.240 1.760 A6 6 0 0 0 1.760 10.240z" fill="#808080"/><circle cx="6" cy="6" r="5" fill="#c0c0c0"/><path d="M9.540 2.460 A5 5 0 0 0 2.460 9.540z" fill="#000"/><circle cx="6" cy="6" r="3.8" fill="#c0c0c0"/><circle cx="6" cy="6" r="2" fill="#808080"/></svg>
<div class="" style="left:183px;top:78px;width:7px;height:1px;background:#fff"></div>
<div class="" style="left:182px;top:77px;width:7px;height:1px;background:#808080"></div>
<div class="dis x13" style="left:182px;top:66px;;letter-spacing:-0.18px">Repeat</div>
<div class="sunk" style="left:228px;top:61px;width:59px;height:22px;background:#c0c0c0"></div>
<div class="x13" style="left:232px;top:65px;color:#808080">1</div>
<div class="btn" style="left:270px;top:63px;width:15px;height:9px;"></div>
<div class="btn" style="left:270px;top:72px;width:15px;height:9px;"></div>
<svg style="left:275px;top:66px" width="5" height="3" viewBox="0 0 5 3" shape-rendering="crispEdges" ><polygon points="0,3 5,3 2.500,0" fill="#808080"/></svg>
<svg style="left:275px;top:76px" width="5" height="3" viewBox="0 0 5 3" shape-rendering="crispEdges" ><polygon points="0,0 5,0 2.500,3" fill="#808080"/></svg>
<div class="x13" style="left:290.70000000000005px;top:67px;;letter-spacing:-0.616px">time(s)</div>
<svg style="left:24px;top:85px" width="12" height="12" viewBox="0 0 12 12"><circle cx="6" cy="6" r="6" fill="#fff"/><path d="M10.240 1.760 A6 6 0 0 0 1.760 10.240z" fill="#808080"/><circle cx="6" cy="6" r="5" fill="#c0c0c0"/><path d="M9.540 2.460 A5 5 0 0 0 2.460 9.540z" fill="#000"/><circle cx="6" cy="6" r="3.8" fill="#fff"/><circle cx="6" cy="6" r="2" fill="#000"/></svg>
<div class="" style="left:41px;top:97px;width:7px;height:1px;background:#000"></div>
<div class="x13" style="left:41px;top:86px;;letter-spacing:-0.199px">No wait - Play in endless loop</div>
<div class="" style="left:40px;top:84px;width:140px;height:16px;border:1px dotted #000;box-sizing:border-box"></div>
<svg style="left:24px;top:106px" width="12" height="12" viewBox="0 0 12 12"><circle cx="6" cy="6" r="6" fill="#fff"/><path d="M10.240 1.760 A6 6 0 0 0 1.760 10.240z" fill="#808080"/><circle cx="6" cy="6" r="5" fill="#c0c0c0"/><path d="M9.540 2.460 A5 5 0 0 0 2.460 9.540z" fill="#000"/><circle cx="6" cy="6" r="3.8" fill="#fff"/></svg>
<div class="x13" style="left:41px;top:107px;;letter-spacing:-0.222px">No wait - Play 1 time only</div>
<div class="sunk" style="left:24px;top:130px;width:13px;height:13px;"></div>
<div class="x13" style="left:43px;top:131px;;letter-spacing:-0.273px">Timer (Flash, recommended for action scripts)</div>
<div class="sunk" style="left:260px;top:126px;width:54px;height:22px;background:#c0c0c0"></div>
<div class="x13" style="left:264px;top:130px;color:#808080">0</div>
<div class="btn" style="left:297px;top:128px;width:15px;height:9px;"></div>
<div class="btn" style="left:297px;top:137px;width:15px;height:9px;"></div>
<svg style="left:302px;top:131px" width="5" height="3" viewBox="0 0 5 3" shape-rendering="crispEdges" ><polygon points="0,3 5,3 2.500,0" fill="#808080"/></svg>
<svg style="left:302px;top:141px" width="5" height="3" viewBox="0 0 5 3" shape-rendering="crispEdges" ><polygon points="0,0 5,0 2.500,3" fill="#808080"/></svg>
<div class="x13" style="left:320.5px;top:130px;;letter-spacing:-0.037px">[sec]</div>
<div class="" style="left:347px;top:33px;width:75px;height:23px;background:#000"></div>
<div class="btn" style="left:348px;top:34px;width:73px;height:21px;"></div>
<div class="x13" style="left:377.4px;top:38px;;letter-spacing:-0.606px">OK</div>
<div class="btn" style="left:347px;top:61px;width:75px;height:23px;"></div>
<div class="x13" style="left:368.5px;top:66px;;letter-spacing:-0.17px">Cancel</div>
<div class="grp" style="left:14px;top:178px;width:407px;height:104px;box-sizing:border-box"></div>
<div class="lab x13" style="left:21.5px;top:173px;;letter-spacing:-0.363px">Position &amp; size</div>
<div class="grp" style="left:23px;top:199px;width:116px;height:60px;box-sizing:border-box"></div>
<div class="lab x13" style="left:29.5px;top:194px;;letter-spacing:-0.138px">X position</div>
<svg style="left:28px;top:217px" width="12" height="12" viewBox="0 0 12 12"><circle cx="6" cy="6" r="6" fill="#fff"/><path d="M10.240 1.760 A6 6 0 0 0 1.760 10.240z" fill="#808080"/><circle cx="6" cy="6" r="5" fill="#c0c0c0"/><path d="M9.540 2.460 A5 5 0 0 0 2.460 9.540z" fill="#000"/><circle cx="6" cy="6" r="3.8" fill="#fff"/><circle cx="6" cy="6" r="2" fill="#000"/></svg>
<div class="x13" style="left:44.30000000000001px;top:217px;;letter-spacing:-0.249px">Absolute</div>
<svg style="left:28px;top:234px" width="12" height="12" viewBox="0 0 12 12"><circle cx="6" cy="6" r="6" fill="#fff"/><path d="M10.240 1.760 A6 6 0 0 0 1.760 10.240z" fill="#808080"/><circle cx="6" cy="6" r="5" fill="#c0c0c0"/><path d="M9.540 2.460 A5 5 0 0 0 2.460 9.540z" fill="#000"/><circle cx="6" cy="6" r="3.8" fill="#fff"/></svg>
<div class="x13" style="left:44.69999999999999px;top:234px;;letter-spacing:-0.34px">Centered</div>
<div class="sunk" style="left:96px;top:214px;width:39px;height:22px;"></div>
<div class="x13" style="left:99.69999999999999px;top:218px;;letter-spacing:-0.387px">175</div>
<div class="grp" style="left:144px;top:199px;width:116px;height:60px;box-sizing:border-box"></div>
<div class="lab x13" style="left:151px;top:194px;;letter-spacing:-0.193px">Y position</div>
<svg style="left:151px;top:217px" width="12" height="12" viewBox="0 0 12 12"><circle cx="6" cy="6" r="6" fill="#fff"/><path d="M10.240 1.760 A6 6 0 0 0 1.760 10.240z" fill="#808080"/><circle cx="6" cy="6" r="5" fill="#c0c0c0"/><path d="M9.540 2.460 A5 5 0 0 0 2.460 9.540z" fill="#000"/><circle cx="6" cy="6" r="3.8" fill="#fff"/><circle cx="6" cy="6" r="2" fill="#000"/></svg>
<div class="x13" style="left:167.3px;top:217px;;letter-spacing:-0.249px">Absolute</div>
<svg style="left:151px;top:234px" width="12" height="12" viewBox="0 0 12 12"><circle cx="6" cy="6" r="6" fill="#fff"/><path d="M10.240 1.760 A6 6 0 0 0 1.760 10.240z" fill="#808080"/><circle cx="6" cy="6" r="5" fill="#c0c0c0"/><path d="M9.540 2.460 A5 5 0 0 0 2.460 9.540z" fill="#000"/><circle cx="6" cy="6" r="3.8" fill="#fff"/></svg>
<div class="x13" style="left:167.7px;top:234px;;letter-spacing:-0.34px">Centered</div>
<div class="sunk" style="left:218px;top:214px;width:39px;height:22px;"></div>
<div class="x13" style="left:221.7px;top:218px;;letter-spacing:-0.15px">20</div>
<div class="x13" style="left:273px;top:208px;;letter-spacing:0.119px">Width</div>
<div class="sunk" style="left:312px;top:202px;width:59px;height:22px;"></div>
<div class="x13" style="left:315.70000000000005px;top:206px;;letter-spacing:-0.137px">450</div>
<div class="x13" style="left:272.6px;top:238px;;letter-spacing:-0.163px">Height</div>
<div class="sunk" style="left:312px;top:232px;width:59px;height:22px;"></div>
<div class="x13" style="left:315.70000000000005px;top:236px;;letter-spacing:-0.137px">220</div>
<div class="btn" style="left:297px;top:258px;width:75px;height:23px;"></div>
<div class="x13" style="left:307.0px;top:263px;;letter-spacing:-0.173px">Default size</div>
<div class="sunk" style="left:23px;top:264px;width:13px;height:13px;"></div>
<div class="x13" style="left:41.5px;top:265px;;letter-spacing:-0.304px">Fullscreen (Flash only)</div>
</div>
</body></html>
